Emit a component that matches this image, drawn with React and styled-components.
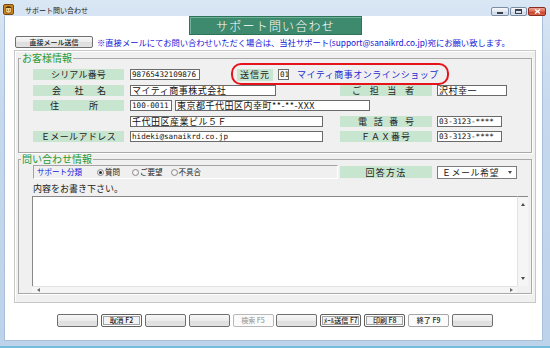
import React from 'react';
import styled, { createGlobalStyle, css } from 'styled-components';

const JP = `"Noto Sans CJK JP", "Noto Sans", sans-serif`;
const MONO = `"DejaVu Sans Mono", "Liberation Mono", "Noto Sans CJK JP", monospace`;

const GlobalStyle = createGlobalStyle`
  html, body { margin: 0; padding: 0; background: #fff; }
  body { font-family: ${JP}; }
  *, *::before, *::after { box-sizing: border-box; }
`;

const Window = styled.div`
  width: 550px;
  height: 348px;
  display: flex;
  flex-direction: column;
  overflow: hidden;
  font-family: ${JP};
  background: linear-gradient(180deg, #d9e6f4 0%, #c6d9ee 30%, #bdd3eb 100%);
  border-bottom: 2px solid #74bcd9;
`;

const TitleBar = styled.div`
  height: 16px;
  flex: none;
  display: flex;
  align-items: flex-start;
  padding: 4px 4px 0 3px;
`;

const TitleText = styled.span`
  margin-left: 11px;
  margin-top: 2px;
  font-size: 7px;
  line-height: 8px;
  color: #1a1a1a;
`;

const Controls = styled.div`
  margin-left: auto;
  margin-top: 3px;
  display: flex;
  gap: 1px;
`;

const CtrlBtn = styled.div`
  width: ${p => p.$w}px;
  height: 9px;
  border-radius: 2px;
  display: flex;
  align-items: center;
  justify-content: center;
  ${p => p.$close ? css`
    border: 1px solid #8c2b1f;
    background: linear-gradient(180deg, #eaa595 0%, #dc6650 50%, #c7391f 51%, #d9684e 100%);
  ` : css`
    border: 1px solid #7b8ea8;
    background: linear-gradient(180deg, #f6f8fb 0%, #e1e8f1 50%, #cfd9e6 51%, #dae2ed 100%);
  `}
`;

const MinGlyph = styled.span`
  width: 6px;
  height: 2px;
  margin-top: 3px;
  background: #39414d;
`;

const MaxGlyph = styled.span`
  width: 7px;
  height: 5px;
  border: 1px solid #39414d;
  border-top-width: 2px;
`;

const Client = styled.div`
  flex: 1;
  margin: 0 7px 5px 4px;
  background: #fff;
  border: 1px solid #a9bed7;
  border-top: none;
  display: flex;
  flex-direction: column;
`;

const HeaderRow = styled.div`
  flex: none;
  height: 19px;
  padding-left: 184px;
  display: flex;
`;

const Banner = styled.div`
  width: 173px;
  height: 19px;
  background: #3d8a6f;
  border: 1px solid #2e7459;
  box-shadow: inset 1px 1px 0 #70b29a;
  color: #fff;
  font-size: 12px;
  font-weight: 300;
  letter-spacing: 1.2px;
  display: flex;
  align-items: center;
  justify-content: center;
`;

const NoticeRow = styled.div`
  flex: none;
  margin-top: 1px;
  height: 12px;
  display: flex;
  align-items: center;
  padding-left: 10px;
  gap: 4px;
`;

const Notice = styled.span`
  color: #1212d6;
  font-size: 8.3px;
  line-height: 12px;
  white-space: nowrap;
`;

const PushButton = styled.div`
  width: ${p => p.$w}px;
  height: ${p => p.$h || 13}px;
  flex: none;
  border-radius: 2px;
  font-size: 7px;
  font-weight: 500;
  line-height: 11px;
  color: #222;
  display: flex;
  align-items: center;
  justify-content: center;
  white-space: nowrap;
  ${p => p.$kind === 'focus' ? css`
    border: 1px solid #5e5e5e;
    background: #f3f3f3;
    box-shadow: inset 0 0 0 1px #ffffff, inset 0 0 0 2px #a2a2a2;
  ` : p.$kind === 'flat' ? css`
    border: 1px solid #a6a6a6;
    background: #fbfbfb;
  ` : p.$kind === 'disabled' ? css`
    border: 1px solid #b8b8b8;
    background: #fbfbfb;
    color: #a0a0a0;
  ` : css`
    border: 1px solid #6f6f6f;
    background: linear-gradient(180deg, #f7f7f7 0%, #ececec 50%, #dedede 51%, #e3e3e3 100%);
  `}
`;

const Panel = styled.div`
  flex: none;
  margin: 2px 0 0 9px;
  width: 522px;
  height: 253px;
  background: #f0f0f0;
  border: 1px solid #c7c7c7;
  box-shadow: inset 1px 1px 0 #ffffff;
  padding: 2px 3px 0 3px;
  display: flex;
  flex-direction: column;
`;

const Group = styled.fieldset`
  margin: ${p => p.$mt || 0}px 0 0 0;
  min-width: 0;
  border: 1px solid #a9a9a9;
  box-shadow: 1px 1px 0 #ffffff;
  padding: ${p => p.$pad};
`;

const Legend = styled.legend`
  font-size: 10px;
  line-height: 10px;
  height: 10px;
  padding: 0 1px;
  margin-left: ${p => p.$ml}px;
  color: #1f9a34;
`;

const FormGrid = styled.div`
  display: grid;
  grid-template-columns: 97px 210px 97px 1fr;
  grid-auto-rows: 11px;
  row-gap: 4.5px;
  align-items: center;
`;

const Cell = styled.div`
  grid-column: ${p => p.$col};
  display: flex;
  align-items: center;
  height: 11px;
`;

const Label = styled.div`
  grid-column: ${p => p.$col || 'auto'};
  width: ${p => p.$w || 91}px;
  height: ${p => p.$h || 11}px;
  flex: none;
  background: #c8e5d0;
  color: #222;
  font-size: 9px;
  line-height: 11px;
  letter-spacing: ${p => p.$ls || 0}px;
  display: flex;
  align-items: center;
  justify-content: ${p => (p.$spread ? 'space-between' : 'center')};
  padding: 0 ${p => p.$pr || 0}px 0 ${p => p.$pl || 0}px;
  white-space: nowrap;
  margin-left: ${p => p.$ml || 0}px;
`;

const Field = styled.div`
  grid-column: ${p => p.$col || 'auto'};
  width: ${p => p.$w}px;
  height: 11px;
  flex: none;
  background: #fff;
  border: 1px solid #6a6a6a;
  padding-left: 1px;
  margin-left: ${p => p.$ml || 0}px;
  color: #111;
  white-space: nowrap;
  overflow: hidden;
  display: flex;
  align-items: center;
  ${p => p.$mono ? css`
    font-family: ${MONO};
    font-size: 7.6px;
    line-height: 9px;
  ` : css`
    font-family: ${JP};
    font-size: 9px;
    line-height: 9px;
    letter-spacing: 0.5px;
  `}
`;

const SenderCell = styled.div`
  position: relative;
  margin-left: 37px;
  display: flex;
  align-items: center;
  height: 11px;
`;

const Ring = styled.div`
  position: absolute;
  left: -6px;
  right: -10px;
  top: -6px;
  bottom: -5px;
  border: 2px solid #e5141b;
  border-radius: 10px;
  pointer-events: none;
`;

const ShopName = styled.span`
  margin-left: 8px;
  color: #1b2bd0;
  font-size: 9px;
  letter-spacing: 0.5px;
  line-height: 11px;
  white-space: nowrap;
`;

const TopRow = styled.div`
  display: flex;
  align-items: center;
  height: 14px;
  margin-top: 1px;
`;

const KindBox = styled.div`
  width: 305px;
  height: 14px;
  margin-left: 1px;
  background: #f0f0f0;
  border-top: 1px solid #a4a4a4;
  border-left: 1px solid #a4a4a4;
  border-bottom: 1px solid #ffffff;
  border-right: 1px solid #ffffff;
  display: flex;
  align-items: center;
  padding-left: 3px;
`;

const KindTitle = styled.span`
  color: #1414e0;
  font-size: 7.5px;
  line-height: 10px;
  white-space: nowrap;
`;

const RadioItem = styled.span`
  margin-left: ${p => p.$ml}px;
  display: flex;
  align-items: center;
  font-size: 7.5px;
  line-height: 10px;
  color: #222;
  white-space: nowrap;
`;

const Radio = styled.span`
  width: 7px;
  height: 7px;
  border-radius: 50%;
  border: 1px solid #8d8d8d;
  background: radial-gradient(circle, #ffffff 0%, #e2e2e2 100%);
  margin-right: 1px;
  display: flex;
  align-items: center;
  justify-content: center;
  &::after {
    content: '';
    width: 3px;
    height: 3px;
    border-radius: 50%;
    background: ${p => (p.$on ? '#2a2a2a' : 'transparent')};
  }
`;

const Select = styled.div`
  width: 80px;
  height: 13px;
  margin-left: 5px;
  background: #fff;
  border: 1px solid #7d7d7d;
  display: flex;
  align-items: center;
  justify-content: space-between;
  padding: 0 4px 0 4px;
  font-size: 9px;
  letter-spacing: 0.5px;
  color: #222;
  white-space: nowrap;
`;

const Prompt = styled.div`
  margin-top: 4px;
  padding-left: 1px;
  height: 11px;
  font-size: 9px;
  line-height: 11px;
  color: #222;
  white-space: nowrap;
`;

const Memo = styled.div`
  margin-top: 2px;
  width: 496px;
  height: 97px;
  display: grid;
  grid-template-columns: 1fr 11px;
  grid-template-rows: 1fr 7px;
`;

const MemoArea = styled.div`
  background: #fff;
  border-top: 1px solid #888;
  border-left: 1px solid #888;
`;

const VScroll = styled.div`
  background: #f5f5f5;
  border-left: 1px solid #e2e2e2;
  border-top: 1px solid #888;
  display: flex;
  flex-direction: column;
  align-items: center;
  justify-content: space-between;
  padding: 6px 0 6px;
`;

const HScroll = styled.div`
  background: #f5f5f5;
  border-top: 1px solid #e2e2e2;
  display: flex;
  align-items: center;
  justify-content: space-between;
  padding: 0 4px 0 5px;
`;

const Corner = styled.div`
  background: #f0f0f0;
`;

const Arrow = styled.span`
  width: 0;
  height: 0;
  ${p => p.$dir === 'up' && css`
    border-left: 2.5px solid transparent;
    border-right: 2.5px solid transparent;
    border-bottom: 3px solid #4a4a4a;
  `}
  ${p => p.$dir === 'down' && css`
    border-left: 2.5px solid transparent;
    border-right: 2.5px solid transparent;
    border-top: 3px solid #4a4a4a;
  `}
  ${p => p.$dir === 'left' && css`
    border-top: 2.5px solid transparent;
    border-bottom: 2.5px solid transparent;
    border-right: 3px solid #6a6a6a;
  `}
  ${p => p.$dir === 'right' && css`
    border-top: 2.5px solid transparent;
    border-bottom: 2.5px solid transparent;
    border-left: 3px solid #6a6a6a;
  `}
`;

const ButtonBar = styled.div`
  flex: none;
  margin-top: 11px;
  padding-left: 52px;
  display: flex;
  gap: 2.9px;
`;

const Spread = ({ text }) => text.split('').map((c, i) => <span key={i}>{c}</span>);

const AppIcon = () => (
  <svg width="11" height="11" viewBox="0 0 11 11">
    <rect x="0.5" y="0.5" width="10" height="10" rx="1.5" fill="#c9861f" stroke="#7a4a10" />
    <circle cx="5.5" cy="6" r="3.3" fill="#f3cf86" stroke="#6b3d0c" strokeWidth="0.7" />
    <path d="M2 4 Q5.5 0.5 9 4" fill="#5a3108" />
    <circle cx="4.3" cy="6" r="0.6" fill="#3a2005" />
    <circle cx="6.7" cy="6" r="0.6" fill="#3a2005" />
  </svg>
);

const CloseGlyph = () => (
  <svg width="7" height="5" viewBox="0 0 7 5">
    <path d="M1 0.5 L6 4.5 M6 0.5 L1 4.5" stroke="#fff" strokeWidth="1.4" />
  </svg>
);

const bottomButtons = [
  { t: '', k: 'blank' },
  { t: '取消 F2', k: 'focus' },
  { t: '', k: 'blank' },
  { t: '', k: 'blank' },
  { t: '検索 F5', k: 'disabled' },
  { t: '', k: 'blank' },
  { t: 'ﾒｰﾙ送信 F7', k: 'focus' },
  { t: '印刷 F8', k: 'focus' },
  { t: '終了 F9', k: 'flat' },
  { t: '', k: 'blank' },
];

export default function App() {
  return (
    <>
      <GlobalStyle />
      <Window>
        <TitleBar>
          <AppIcon />
          <TitleText>サポート問い合わせ</TitleText>
          <Controls>
            <CtrlBtn $w={18}><MinGlyph /></CtrlBtn>
            <CtrlBtn $w={17}><MaxGlyph /></CtrlBtn>
            <CtrlBtn $w={18} $close><CloseGlyph /></CtrlBtn>
          </Controls>
        </TitleBar>
        <Client>
          <HeaderRow>
            <Banner>サポート問い合わせ</Banner>
          </HeaderRow>
          <NoticeRow>
            <PushButton $w={78} $h={12}>直接メール送信</PushButton>
            <Notice>※直接メールにてお問い合わせいただく場合は、当社サポート(support@sanaikrd.co.jp)宛にお願い致します。</Notice>
          </NoticeRow>
          <Panel>
            <Group $mt={0} $pad="6px 0 10px 14px">
              <Legend $ml={-12}>お客様情報</Legend>
              <FormGrid>
                <Label $ls={0.2}>シリアル番号</Label>
                <Cell $col="2 / 5">
                  <Field $w={70} $mono>98765432109876</Field>
                  <SenderCell>
                    <Ring />
                    <Label $w={36} $h={12} $ls={1}>送信元</Label>
                    <Field $w={11} $ml={5} $mono>01</Field>
                    <ShopName>マイティ商事オンラインショップ</ShopName>
                  </SenderCell>
                </Cell>

                <Label $spread $pl={19} $pr={18}><Spread text="会社名" /></Label>
                <Field $col="2" $w={146}>マイティ商事株式会社</Field>
                <Label $col="3" $w={92} $spread $pl={12} $pr={18}><Spread text="ご担当者" /></Label>
                <Field $col="4" $w={70}>沢村幸一</Field>

                <Label $spread $pl={17} $pr={26}><Spread text="住所" /></Label>
                <Cell $col="2 / 5">
                  <Field $w={42} $mono>100-0011</Field>
                  <Field $w={195} $ml={3}>東京都千代田区内幸町**-**-XXX</Field>
                </Cell>

                <Field $col="2" $w={193}>千代田区産業ビル５Ｆ</Field>
                <Label $col="3" $w={92} $spread $pl={18} $pr={18}><Spread text="電話番号" /></Label>
                <Field $col="4" $w={65} $mono>03-3123-****</Field>

                <Label $ls={0.4}>Ｅメールアドレス</Label>
                <Field $col="2" $w={193} $mono>hideki@sanaikrd.co.jp</Field>
                <Label $col="3" $w={92} $ls={1}>ＦＡＸ番号</Label>
                <Field $col="4" $w={65} $mono>03-3123-****</Field>
              </FormGrid>
            </Group>

            <Group $mt={1} $pad="0 3px 0 13px">
              <Legend $ml={-11}>問い合わせ情報</Legend>
              <TopRow>
                <KindBox>
                  <KindTitle>サポート分類</KindTitle>
                  <RadioItem $ml={15}><Radio $on />質問</RadioItem>
                  <RadioItem $ml={12}><Radio />ご要望</RadioItem>
                  <RadioItem $ml={8}><Radio />不具合</RadioItem>
                </KindBox>
                <Label $w={92} $h={12} $ml={2} $ls={1.3}>回答方法</Label>
                <Select>
                  <span>Ｅメール希望</span>
                  <Arrow $dir="down" />
                </Select>
              </TopRow>
              <Prompt>内容をお書き下さい。</Prompt>
              <Memo>
                <MemoArea />
                <VScroll>
                  <Arrow $dir="up" />
                  <Arrow $dir="down" />
                </VScroll>
                <HScroll>
                  <Arrow $dir="left" />
                  <Arrow $dir="right" />
                </HScroll>
                <Corner />
              </Memo>
            </Group>
          </Panel>
          <ButtonBar>
            {bottomButtons.map((b, i) => (
              <PushButton key={i} $w={41} $kind={b.k}>{b.t}</PushButton>
            ))}
          </ButtonBar>
        </Client>
      </Window>
    </>
  );
}
